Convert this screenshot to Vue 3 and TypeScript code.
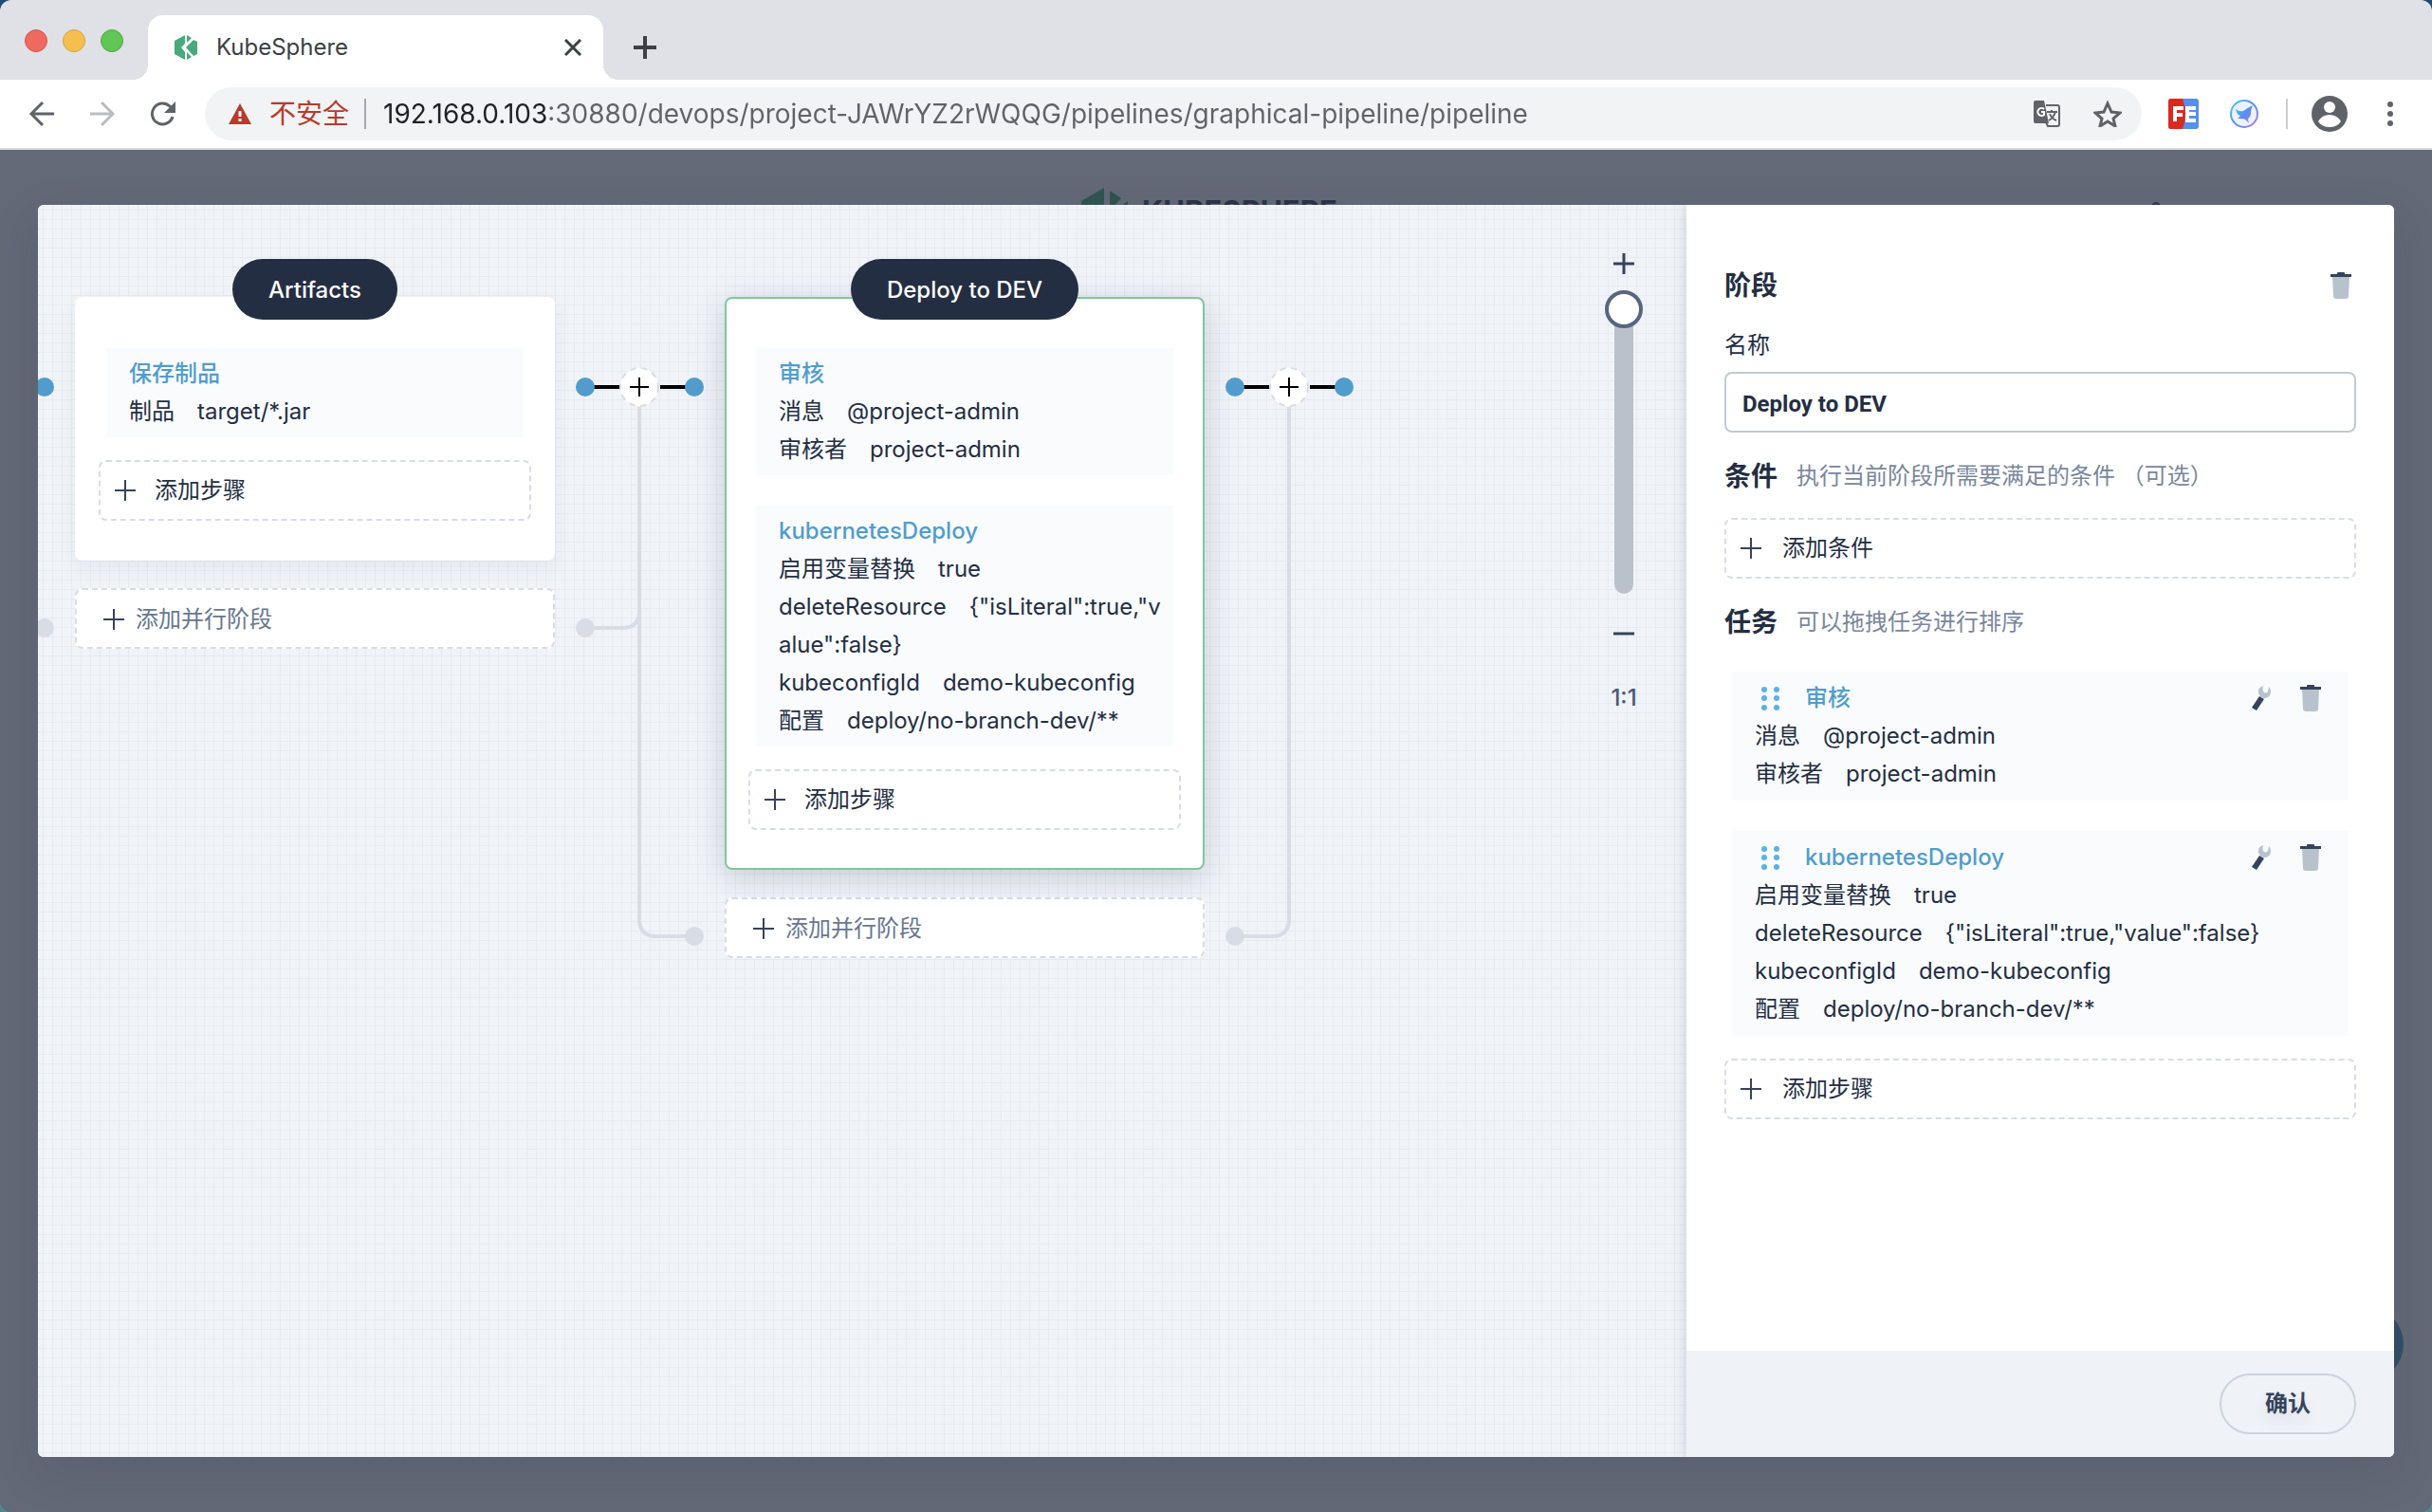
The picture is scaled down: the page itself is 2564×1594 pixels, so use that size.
<script setup lang="ts">
import { ref } from 'vue'

interface Param {
  label: string
  value: string
}
interface Task {
  name: string
  params: Param[]
}
interface Link {
  // vertical position of the parallel-branch dots, measured from the top of the link
  left?: number
  right?: number
}
interface Stage {
  name: string
  active: boolean
  tasks: Task[]
  link: Link
}

const deployTasks: Task[] = [
  {
    name: '审核',
    params: [
      { label: '消息', value: '@project-admin' },
      { label: '审核者', value: 'project-admin' },
    ],
  },
  {
    name: 'kubernetesDeploy',
    params: [
      { label: '启用变量替换', value: 'true' },
      { label: 'deleteResource', value: '{"isLiteral":true,"value":false}' },
      { label: 'kubeconfigId', value: 'demo-kubeconfig' },
      { label: '配置', value: 'deploy/no-branch-dev/**' },
    ],
  },
]

const stages: Stage[] = [
  {
    name: 'Artifacts',
    active: false,
    tasks: [{ name: '保存制品', params: [{ label: '制品', value: 'target/*.jar' }] }],
    link: { left: 349, right: 674 },
  },
  { name: 'Deploy to DEV', active: true, tasks: deployTasks, link: { left: 674 } },
]

const entryLink: Link = { right: 349 }

const stageName = ref('Deploy to DEV')
const zoom = ref(0)
const url = ref('192.168.0.103:30880/devops/project-JAWrYZ2rWQQG/pipelines/graphical-pipeline/pipeline')

function branchPath(link: Link): string {
  let d = ''
  if (link.left) d += `M89 116V${link.left - 18}Q89 ${link.left} 71 ${link.left}H32`
  if (link.right) d += `M89 116V${link.right - 18}Q89 ${link.right} 107 ${link.right}H147`
  return d
}
</script>

<template>
  <div class="window">
    <header class="tabs">
      <div class="lights"><i class="red"></i><i class="yellow"></i><i class="green"></i></div>
      <div class="tab">
        <svg class="favicon" width="26" height="28" viewBox="0 0 26 28">
          <path d="M12 1v26L1 21V7z" fill="#48a97c" />
          <path d="M14 1l5 3-5 5zM14 19l5 5-5 3zM21 6l4 2v13l-4 2-8-9z" fill="#48a97c" />
          <path d="M12 10l-4 4 4 5z" fill="#fff" />
        </svg>
        <span class="tab-title">KubeSphere</span>
        <button class="plain" aria-label="Close tab">
          <svg width="18" height="18" viewBox="0 0 18 18"><path d="M1 1l16 16M17 1L1 17" stroke="#3c4043" stroke-width="3" /></svg>
        </button>
      </div>
      <button class="plain new-tab" aria-label="New tab">
        <svg width="24" height="24" viewBox="0 0 24 24"><path d="M12 0v24M0 12h24" stroke="#3c4043" stroke-width="4" /></svg>
      </button>
    </header>

    <nav class="toolbar">
      <div class="nav-buttons">
        <button class="plain" aria-label="Back">
          <svg width="28" height="28" viewBox="0 0 28 28" fill="none" stroke="#5f6368" stroke-width="3"><path d="M27 14H3M15 2L3 14l12 12" /></svg>
        </button>
        <button class="plain" aria-label="Forward">
          <svg width="28" height="28" viewBox="0 0 28 28" fill="none" stroke="#babcbe" stroke-width="3"><path d="M1 14h24M13 2l12 12-12 12" /></svg>
        </button>
        <button class="plain" aria-label="Reload">
          <svg width="28" height="28" viewBox="0 0 28 28"><path d="M24 17A11 11 0 1 1 21 6l3 3" fill="none" stroke="#5f6368" stroke-width="3" /><path d="M27 1v12H15z" fill="#5f6368" /></svg>
        </button>
      </div>
      <div class="address">
        <svg width="26" height="24" viewBox="0 0 26 24"><path d="M13 1l12 22H1z" fill="#b93a2b" /><path d="M13 9v6M13 17v3" stroke="#fff" stroke-width="3" /></svg>
        <span class="insecure">不安全</span>
        <input v-model="url" class="url" type="text" aria-label="Address" />
        <button class="plain" aria-label="Translate">
          <svg width="28" height="28" viewBox="0 0 28 28">
            <path d="M2 0h9l5 24H2q-2 0-2-2V2q0-2 2-2z" fill="#5f6368" />
            <path d="M13 5h12q2 0 2 2v18q0 2-2 2H15l-2-4" fill="none" stroke="#5f6368" stroke-width="2" />
            <path d="M11 9a4 4 0 1 0 0 6v-3H8" fill="none" stroke="#fff" stroke-width="2" />
            <path d="M14 12h11M19 10v2M23 12q-2 6-7 9M17 14q2 5 7 7" fill="none" stroke="#5f6368" stroke-width="2" />
          </svg>
        </button>
        <button class="plain" aria-label="Bookmark">
          <svg width="30" height="28" viewBox="0 0 30 28"><path d="M15 3l4 9 9 1-7 6 2 8-8-5-8 5 2-8-7-6 9-1z" fill="none" stroke="#5f6368" stroke-width="3" /></svg>
        </button>
      </div>
      <div class="extensions">
        <button class="plain" aria-label="FE helper">
          <svg width="32" height="32" viewBox="0 0 32 32">
            <rect width="32" height="32" rx="3" fill="#5590ea" />
            <path d="M3 0h12q3 8 3 16t-3 16H3q-3 0-3-3V3q0-3 3-3z" fill="#d92a20" />
            <path d="M7 24V10h9M7 17h8M29 10H20v13h9M20 16h9" fill="none" stroke="#fff" stroke-width="4" />
          </svg>
        </button>
        <button class="plain" aria-label="Bird extension">
          <svg width="30" height="30" viewBox="0 0 30 30">
            <defs><linearGradient id="bird" x1="0" y1="0" x2="1" y2="1"><stop offset="0" stop-color="#4fc8f5" /><stop offset="0.5" stop-color="#5a8df0" /><stop offset="1" stop-color="#b07af0" /></linearGradient></defs>
            <circle cx="15" cy="15" r="14" fill="#eaf3fe" stroke="url(#bird)" stroke-width="2" />
            <path d="M6 10q4 3 8 2 4-3 10-6-2 4-2 8 0 4-3 6 0 2 1 5-3-4-6-5-4 1-6-1 2 0 3-2-4-1-5-7z" fill="url(#bird)" />
          </svg>
        </button>
        <i class="rule"></i>
        <button class="plain" aria-label="Profile">
          <svg width="38" height="38" viewBox="0 0 38 38"><circle cx="19" cy="19" r="19" fill="#5f6368" /><circle cx="19" cy="12" r="6" fill="#fff" /><path d="M7 27q4-7 12-7t12 7q-4 6-12 6T7 27z" fill="#fff" /></svg>
        </button>
        <button class="plain" aria-label="Menu">
          <svg width="8" height="28" viewBox="0 0 8 28" fill="#5f6368"><circle cx="4" cy="4" r="3" /><circle cx="4" cy="14" r="3" /><circle cx="4" cy="24" r="3" /></svg>
        </button>
      </div>
    </nav>

    <main class="backdrop">
      <div class="brand" aria-hidden="true">
        <svg width="50" height="50" viewBox="0 0 50 50" fill="#31544f"><path d="M24 0v50L0 38V14zM30 3l12 8-12 13zM49 14v22l-16-10z" /></svg>
        <span>KUBESPHERE</span>
      </div>
      <i class="user-dot"></i>
      <i class="help"></i>

      <section class="modal">
        <div class="canvas">
          <div class="flow">
            <div class="link">
              <svg width="179" height="700" viewBox="0 0 179 700">
                <path :d="branchPath(entryLink)" class="branch" />
                <circle v-if="entryLink.right" cx="147" :cy="entryLink.right" r="10" fill="#d8dde5" />
                <path d="M32 95h115" stroke="#000" stroke-width="4" />
                <circle cx="147" cy="95" r="10" fill="#519ccc" />
              </svg>
            </div>
            <template v-for="stage in stages" :key="stage.name">
              <div class="stage">
                <article class="card" :class="{ active: stage.active }">
                  <h3 class="pill">{{ stage.name }}</h3>
                  <div class="tasks">
                    <div v-for="task in stage.tasks" :key="task.name" class="task">
                      <h4>{{ task.name }}</h4>
                      <p v-for="p in task.params" :key="p.label">{{ p.label }}<span class="value">{{ p.value }}</span></p>
                    </div>
                  </div>
                  <button class="dashed">
                    <svg width="22" height="22" viewBox="0 0 22 22"><path d="M11 0v22M0 11h22" stroke="#36435c" stroke-width="2" /></svg>添加步骤
                  </button>
                </article>
                <button class="dashed parallel">
                  <svg width="22" height="22" viewBox="0 0 22 22"><path d="M11 0v22M0 11h22" stroke="#36435c" stroke-width="2" /></svg>添加并行阶段
                </button>
              </div>
              <div class="link">
                <svg width="179" height="700" viewBox="0 0 179 700">
                  <path :d="branchPath(stage.link)" class="branch" />
                  <circle v-if="stage.link.left" cx="32" :cy="stage.link.left" r="10" fill="#d8dde5" />
                  <circle v-if="stage.link.right" cx="147" :cy="stage.link.right" r="10" fill="#d8dde5" />
                  <path d="M32 95h37M111 95h36" stroke="#000" stroke-width="4" />
                  <circle cx="32" cy="95" r="10" fill="#519ccc" />
                  <circle cx="147" cy="95" r="10" fill="#519ccc" />
                </svg>
                <button class="plain insert" aria-label="插入阶段">
                  <svg width="42" height="42" viewBox="0 0 42 42">
                    <circle cx="21" cy="21" r="20" fill="#fff" />
                    <circle cx="21" cy="21" r="20" fill="none" stroke="#d8dde5" stroke-width="2" stroke-dasharray="6 6" />
                    <path d="M21 11v20M11 21h20" stroke="#000" stroke-width="2" />
                  </svg>
                </button>
              </div>
            </template>
          </div>
          <div class="zoom">
            <button class="plain" aria-label="放大">
              <svg width="22" height="22" viewBox="0 0 22 22"><path d="M11 0v22M0 11h22" stroke="#36435c" stroke-width="3" /></svg>
            </button>
            <input v-model="zoom" type="range" min="0" max="100" aria-label="缩放" />
            <button class="plain minus" aria-label="缩小">
              <svg width="22" height="22" viewBox="0 0 22 22"><path d="M0 11h22" stroke="#36435c" stroke-width="3" /></svg>
            </button>
            <button class="plain ratio">1:1</button>
          </div>
        </div>

        <aside class="panel">
          <form class="form" @submit.prevent>
            <div class="heading">
              <h2>阶段</h2>
              <button type="button" class="plain" aria-label="删除阶段">
                <svg class="trash" width="22" height="28" viewBox="0 0 22 28"><path d="M2 5h18l-1 20q0 3-3 3H6q-3 0-3-3z" fill="#b7c2cd" /><path d="M0 2h7V1q0-1 1-1h6q1 0 1 1v1h7v3H0z" fill="#36435c" /></svg>
              </button>
            </div>
            <label for="stage-name">名称</label>
            <input id="stage-name" v-model="stageName" class="name" type="text" />
            <div class="section">
              <h2>条件</h2>
              <span>执行当前阶段所需要满足的条件 （可选）</span>
            </div>
            <button type="button" class="dashed">
              <svg width="22" height="22" viewBox="0 0 22 22"><path d="M11 0v22M0 11h22" stroke="#36435c" stroke-width="2" /></svg>添加条件
            </button>
            <div class="section">
              <h2>任务</h2>
              <span>可以拖拽任务进行排序</span>
            </div>
            <div class="tasks">
              <div v-for="task in deployTasks" :key="task.name" class="task">
                <div class="task-head">
                  <svg width="20" height="26" viewBox="0 0 20 26" fill="#5cb0e8">
                    <circle cx="3" cy="4" r="3" /><circle cx="16" cy="4" r="3" /><circle cx="3" cy="13" r="3" />
                    <circle cx="16" cy="13" r="3" /><circle cx="3" cy="23" r="3" /><circle cx="16" cy="23" r="3" />
                  </svg>
                  <h4>{{ task.name }}</h4>
                  <button type="button" class="plain" aria-label="编辑">
                    <svg width="20" height="28" viewBox="0 0 20 28"><path d="M8 12l5 3-8 12-5-3z" fill="#36435c" /><path d="M12 1q-6 2-5 8 2 5 7 5 6-1 6-7 0-3-2-5l-1 5q-2 3-5 0-1-3 0-6z" fill="#b7c2cd" /></svg>
                  </button>
                  <button type="button" class="plain" aria-label="删除">
                    <svg class="trash" width="22" height="28" viewBox="0 0 22 28"><path d="M2 5h18l-1 20q0 3-3 3H6q-3 0-3-3z" fill="#b7c2cd" /><path d="M0 2h7V1q0-1 1-1h6q1 0 1 1v1h7v3H0z" fill="#36435c" /></svg>
                  </button>
                </div>
                <p v-for="p in task.params" :key="p.label">{{ p.label }}<span class="value">{{ p.value }}</span></p>
              </div>
            </div>
            <button type="button" class="dashed">
              <svg width="22" height="22" viewBox="0 0 22 22"><path d="M11 0v22M0 11h22" stroke="#36435c" stroke-width="2" /></svg>添加步骤
            </button>
          </form>
          <footer class="actions">
            <button class="confirm">确认</button>
          </footer>
        </aside>
      </section>
    </main>
  </div>
</template>

<style>
body {
  background: linear-gradient(#1d4a78, #4e8a8c);
}
</style>

<style scoped>
* {
  box-sizing: border-box;
}
h2,
h3,
h4,
p {
  margin: 0;
}
i {
  display: block;
}
svg {
  display: block;
  flex: none;
}
button,
input {
  font: inherit;
  color: inherit;
}
.plain {
  border: 0;
  padding: 0;
  background: none;
}
.window {
  min-height: 100vh;
  display: flex;
  flex-direction: column;
  overflow: hidden;
  border-radius: 12px;
  background: #636977;
  color: #242e42;
  font: 24px/40px Inter, 'Noto Sans CJK SC', sans-serif;
}

/* browser chrome */
.tabs {
  display: flex;
  height: 84px;
  padding: 16px 0 0 26px;
  background: #dfe1e6;
}
.lights {
  display: flex;
  gap: 16px;
  width: 130px;
  padding-top: 15px;
}
.lights i {
  width: 24px;
  height: 24px;
  border: 1px solid;
  border-radius: 50%;
}
.lights .red {
  background: #ee6a5f;
  border-color: #d5564c;
}
.lights .yellow {
  background: #f5bf4f;
  border-color: #d8a13c;
}
.lights .green {
  background: #61c655;
  border-color: #51a73e;
}
.tab {
  position: relative;
  display: flex;
  align-items: center;
  width: 480px;
  padding: 0 23px 0 27px;
  border-radius: 16px 16px 0 0;
  background: #fff;
}
.tab::before,
.tab::after {
  content: '';
  position: absolute;
  bottom: 0;
  width: 16px;
  height: 16px;
}
.tab::before {
  right: 100%;
  background: radial-gradient(circle at 0 0, transparent 16px, #fff 16px);
}
.tab::after {
  left: 100%;
  background: radial-gradient(circle at 100% 0, transparent 16px, #fff 16px);
}
.tab-title {
  flex: 1;
  margin-left: 19px;
  color: #3c4043;
}
.new-tab {
  margin-left: 32px;
}
.toolbar {
  display: flex;
  align-items: center;
  height: 74px;
  padding: 0 40px 0 30px;
  border-bottom: 2px solid #d8dade;
  background: #fff;
}
.nav-buttons {
  display: flex;
  gap: 36px;
  width: 186px;
}
.address {
  flex: 1;
  display: flex;
  align-items: center;
  height: 56px;
  padding: 0 21px 0 24px;
  border-radius: 28px;
  background: #f1f3f4;
  font-size: 28px;
}
.address button {
  margin-left: 35px;
}
.insecure {
  margin-left: 18px;
  padding-right: 16px;
  border-right: 2px solid #a5a8ab;
  color: #b93a2b;
  line-height: 32px;
}
.url {
  flex: 1;
  min-width: 0;
  height: 40px;
  margin-left: 18px;
  padding: 0;
  border: 0;
  outline: 0;
  background: linear-gradient(90deg, #202124 174px, #5f6368 174px);
  background-clip: text;
  color: transparent;
  font-family: Inter, sans-serif;
}
.extensions {
  display: flex;
  align-items: center;
  margin-left: 28px;
}
.extensions button + button {
  margin-left: 33px;
}
.extensions .rule {
  width: 2px;
  height: 32px;
  margin: 0 25px 0 29px;
  background: #ccced1;
}
.extensions .rule + button + button {
  margin-left: 41px;
}

/* dimmed page behind the dialog */
.backdrop {
  position: relative;
  flex: 1;
  display: flex;
  padding: 58px 40px;
}
.brand {
  position: absolute;
  top: 40px;
  left: calc(50% - 142px);
  display: flex;
  gap: 14px;
  color: #2d3347;
  font: 700 31px/50px Inter, sans-serif;
}
.user-dot {
  position: absolute;
  top: 55px;
  right: 286px;
  width: 10px;
  height: 10px;
  border-radius: 50%;
  background: #343c50;
}
.help {
  position: absolute;
  right: 30px;
  bottom: 137px;
  width: 80px;
  height: 80px;
  border-radius: 50%;
  background: #344f69;
}
.modal {
  position: relative;
  flex: 1;
  display: flex;
  min-width: 0;
  overflow: hidden;
  border-radius: 6px;
  background: #eff3f8;
  box-shadow: 0 16px 48px rgba(36, 46, 66, 0.15);
}

/* pipeline canvas */
.canvas {
  position: relative;
  flex: 1;
  min-width: 0;
  overflow: hidden;
  background:
    linear-gradient(#e7ebf0 1px, transparent 1px) 0 5px / 10px 10px,
    linear-gradient(90deg, #e7ebf0 1px, transparent 1px) 5px 0 / 10px 10px,
    #f0f4f9;
}
.flow {
  display: flex;
  align-items: flex-start;
  margin: 97px 0 0 -140px;
}
.link {
  position: relative;
  flex: none;
  width: 179px;
}
.branch {
  fill: none;
  stroke: #d8dde5;
  stroke-width: 4;
}
.insert {
  position: absolute;
  top: 74px;
  left: 68px;
}
.stage {
  flex: none;
  width: 506px;
}
.card {
  position: relative;
  display: flex;
  flex-direction: column;
  align-items: center;
  padding: 0 23px 40px;
  border: 2px solid #fff;
  border-radius: 8px;
  background: #fff;
  box-shadow: 0 8px 20px rgba(36, 46, 66, 0.06);
}
.card.active {
  border-color: #7fc79b;
  box-shadow: 0 8px 32px rgba(36, 46, 66, 0.2);
}
.pill {
  height: 64px;
  margin-top: -42px;
  padding: 0 38px;
  border-radius: 32px;
  background: #242e42;
  color: #fff;
  font-size: 24px;
  font-weight: 500;
  line-height: 66px;
}
.tasks {
  display: flex;
  flex-direction: column;
  gap: 32px;
  align-self: stretch;
  margin: 30px 8px 24px;
}
.task {
  padding: 8px 24px;
  background: #f9fbfd;
  word-break: break-all;
}
.card .task {
  padding: 7px 10px 7px 24px;
}
.task h4 {
  color: #519ccc;
  font-size: 24px;
  font-weight: 500;
}
.value {
  margin-left: 24px;
}
.dashed {
  display: flex;
  align-items: center;
  gap: 22px;
  width: 100%;
  height: 64px;
  padding: 0 15px;
  border: 2px dashed #d8dde5;
  border-radius: 8px;
  background: #fff;
}
.card .dashed {
  gap: 20px;
}
.parallel {
  gap: 12px;
  margin-top: 29px;
  padding: 2px 28px 0;
  color: #68778f;
}
.zoom {
  position: absolute;
  top: 51px;
  right: 46px;
  display: flex;
  flex-direction: column;
  align-items: center;
}
.zoom input {
  appearance: none;
  writing-mode: vertical-lr;
  width: 40px;
  height: 320px;
  margin: 17px 0 31px;
  background: none;
}
.zoom input::-webkit-slider-runnable-track {
  width: 20px;
  height: 320px;
  border-radius: 10px;
  background: #b9c2cb;
}
.zoom input::-webkit-slider-thumb {
  appearance: none;
  width: 40px;
  height: 40px;
  margin-left: -10px;
  border: 4px solid #57657f;
  border-radius: 50%;
  background: #fff;
}
.zoom .ratio {
  margin-top: 37px;
  color: #4a5974;
  font-weight: 500;
}

/* stage editor */
.panel {
  position: relative;
  flex: none;
  display: flex;
  flex-direction: column;
  width: 746px;
  background: #fff;
  box-shadow: 0 0 16px rgba(36, 46, 66, 0.18);
}
.form {
  flex: 1;
  padding: 65px 40px 0;
}
.heading {
  display: flex;
  align-items: center;
  justify-content: space-between;
  padding-right: 5px;
}
h2 {
  font-size: 28px;
  font-weight: 600;
  line-height: 40px;
}
.form label {
  display: block;
  margin: 23px 0 8px;
}
.name {
  display: block;
  width: 100%;
  height: 64px;
  padding: 3px 17px 0;
  border: 2px solid #c1c9d1;
  border-radius: 8px;
  outline: 0;
  background: #fff;
  font-family: Roboto, sans-serif;
  font-weight: 700;
}
.section {
  display: flex;
  align-items: center;
  gap: 20px;
  margin: 26px 0 24px;
  color: #79879c;
}
.section h2 {
  color: #242e42;
}
.form > .tasks {
  margin: 32px 8px 24px;
}
.task-head {
  display: flex;
  align-items: center;
  padding: 0 5px 0 7px;
}
.task-head h4 {
  flex: 1;
  margin-left: 26px;
}
.task-head button + button {
  margin-left: 31px;
}
.actions {
  display: flex;
  justify-content: flex-end;
  padding: 24px 40px;
  background: #eff3f8;
}
.confirm {
  width: 144px;
  height: 64px;
  border: 2px solid #ccd3db;
  border-radius: 32px;
  background: transparent;
  color: #36435c;
  font-weight: 600;
  text-shadow: 0 8px 16px rgba(36, 46, 66, 0.1);
}
</style>
